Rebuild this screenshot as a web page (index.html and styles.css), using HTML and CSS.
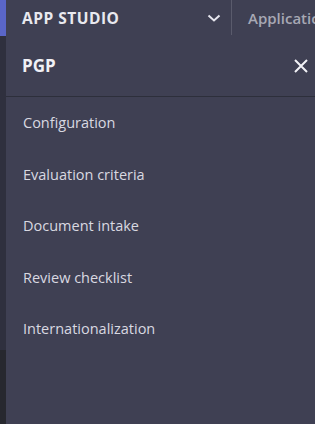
FILE: index.html
```html
<!DOCTYPE html>
<html>
<head>
    <title>App Studio</title>
    <link rel="stylesheet" href="styles.css">
</head>
<body>
    <div class="rail">
        <div class="rail-active"></div>
        <div class="rail-body"></div>
        <div class="rail-foot"></div>
    </div>
    <div class="panel">
        <div class="topbar">
            <div class="switcher">
                <span class="studio">APP STUDIO</span>
                <svg class="chevron" width="14" height="8" viewBox="0 0 14 8">
                    <path d="M1.5 1.5 L7 6.5 L12.5 1.5" fill="none" stroke="#e6e6ee" stroke-width="2"/>
                </svg>
            </div>
            <div class="divider"></div>
            <div class="app-name">Application</div>
        </div>
        <div class="panel-head">
            <span class="panel-title">PGP</span>
            <svg class="close" width="14" height="14" viewBox="0 0 14 14">
                <path d="M1 1 L13 13 M13 1 L1 13" fill="none" stroke="#f2f2f6" stroke-width="2"/>
            </svg>
        </div>
        <ul class="menu">
            <li>Configuration</li>
            <li>Evaluation criteria</li>
            <li>Document intake</li>
            <li>Review checklist</li>
            <li>Internationalization</li>
        </ul>
    </div>
</body>
</html>
```

FILE: styles.css
```css
html, body {
    height: 100%;
}
body {
    margin: 0;
    display: flex;
    background: #3f4053;
    font-family: "Open Sans", "Liberation Sans", sans-serif;
    overflow: hidden;
}
.rail {
    width: 6px;
    display: flex;
    flex-direction: column;
    flex-shrink: 0;
}
.rail-active {
    height: 36px;
    background: #5a66c8;
}
.rail-body {
    height: 314px;
    background: #2f303e;
}
.rail-foot {
    flex: 1;
    background: #27282f;
}
.panel {
    flex: 1;
    display: flex;
    flex-direction: column;
    min-width: 0;
}
.topbar {
    height: 35px;
    display: flex;
    align-items: center;
    white-space: nowrap;
    overflow: hidden;
}
.switcher {
    width: 225px;
    flex-shrink: 0;
    box-sizing: border-box;
    display: flex;
    align-items: center;
    justify-content: space-between;
    padding: 0 10px 0 16px;
}
.studio {
    font-size: 15.5px;
    font-weight: 700;
    color: #e9e9ef;
    letter-spacing: 0.5px;
}
.chevron {
    margin-top: 1px;
}
.divider {
    width: 1px;
    height: 35px;
    flex-shrink: 0;
    align-self: flex-start;
    background: #5a5b6c;
}
.app-name {
    margin-left: 16px;
    flex-shrink: 0;
    font-size: 15px;
    font-weight: 600;
    color: #a7a8b4;
}
.panel-head {
    height: 61px;
    display: flex;
    align-items: center;
    justify-content: space-between;
    padding: 0 7px 0 16px;
    border-bottom: 1px solid #2d2f3b;
}
.panel-title {
    font-size: 17px;
    font-weight: 700;
    color: #f0f0f5;
}
.menu {
    list-style: none;
    margin: 0;
    padding: 0;
}
.menu li {
    height: 51.5px;
    display: flex;
    align-items: center;
    padding-left: 17px;
    font-size: 14.5px;
    color: #d9d9e1;
}
```
